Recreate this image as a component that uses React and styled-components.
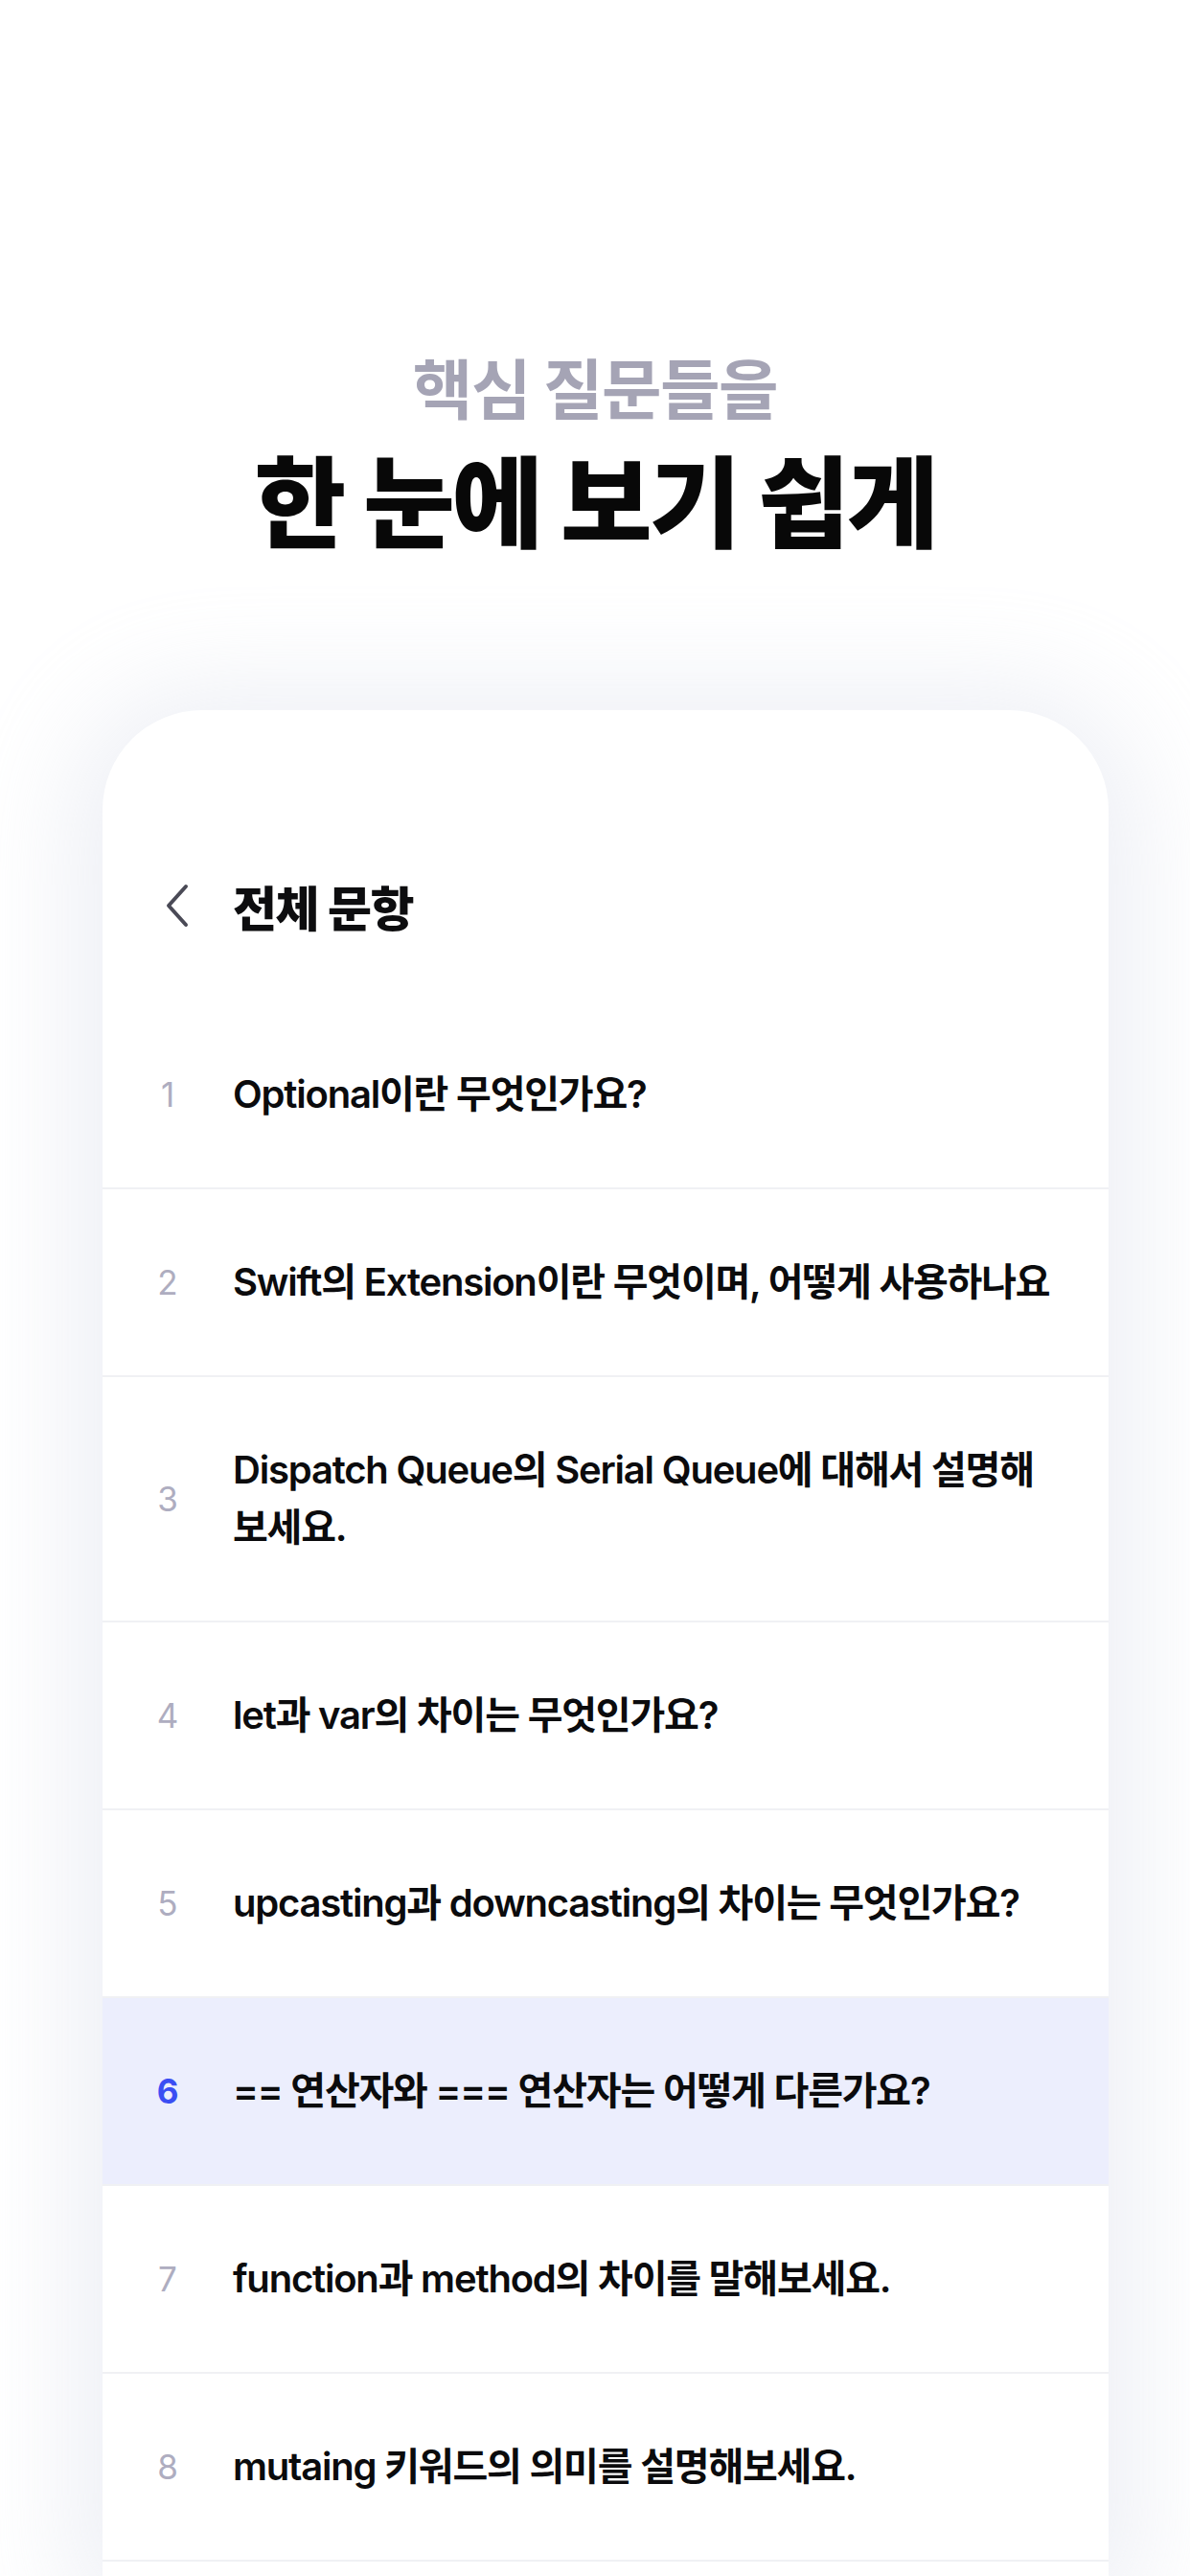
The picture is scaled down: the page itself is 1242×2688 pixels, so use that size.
import React from 'react';
import styled, { createGlobalStyle } from 'styled-components';

const GlobalStyle = createGlobalStyle`
  html, body {
    margin: 0;
    padding: 0;
    background: #ffffff;
  }
  body {
    font-family: Inter, "Noto Sans CJK KR", sans-serif;
    -webkit-font-smoothing: antialiased;
  }
`

const Page = styled.div`
  width: 1242px;
  height: 2688px;
  overflow: hidden;
  display: flex;
  flex-direction: column;
  background: #ffffff;
`

const Hero = styled.header`
  display: flex;
  flex-direction: column;
  align-items: center;
  padding-top: 362px;
  padding-bottom: 157px;
`

const Eyebrow = styled.h2`
  margin: 0;
  font-family: "Noto Sans CJK KR", sans-serif;
  font-size: 68px;
  line-height: 82px;
  font-weight: 700;
  letter-spacing: -1.5px;
  color: #a5a4b5;
`

const Headline = styled.h1`
  margin: 10px 0 0;
  font-family: "Noto Sans CJK KR", sans-serif;
  font-size: 104px;
  line-height: 130px;
  font-weight: 900;
  letter-spacing: -3px;
  color: #080808;
`

const Card = styled.section`
  margin-left: 107px;
  width: 1050px;
  flex: 1;
  background: #ffffff;
  border-radius: 104px 104px 0 0;
  box-shadow: 0 10px 110px 30px rgba(214, 220, 232, 0.45);
  overflow: hidden;
`

const CardHeader = styled.div`
  height: 304px;
  box-sizing: border-box;
  padding: 174px 0 0 64px;
`

const HeaderRow = styled.div`
  display: flex;
  align-items: center;
  gap: 44px;
  height: 60px;
`

const BackButton = styled.button`
  border: 0;
  background: none;
  padding: 0;
  width: 28px;
  height: 46px;
  display: flex;
  align-items: center;
  justify-content: center;
  color: #4a4a56;
`

const CardTitle = styled.h3`
  margin: 0;
  font-family: "Noto Sans CJK KR", sans-serif;
  font-size: 50px;
  font-weight: 800;
  letter-spacing: -1.5px;
  color: #0d0d0f;
`

const List = styled.ol`
  list-style: none;
  margin: 0;
  padding: 0;
`

const Row = styled.li`
  display: flex;
  align-items: center;
  padding: 67px 50px 67px 50px;
  border-bottom: 2px solid #f0f1f4;
  background: ${p => (p.$active ? '#eceefd' : '#ffffff')};
`

const Num = styled.span`
  flex: 0 0 36px;
  text-align: center;
  font-family: Inter, sans-serif;
  font-size: 35px;
  font-weight: ${p => (p.$active ? 700 : 400)};
  color: ${p => (p.$active ? '#3b4ef3' : '#aeadc0')};
  margin-right: 50px;
`

const Question = styled.span`
  flex: 1;
  font-size: 40px;
  line-height: 60px;
  font-weight: 600;
  letter-spacing: -1.2px;
  color: #0b0b0d;
`

const questions = [
  'Optional이란 무엇인가요?',
  'Swift의 Extension이란 무엇이며, 어떻게 사용하나요',
  'Dispatch Queue의 Serial Queue에 대해서 설명해보세요.',
  'let과 var의 차이는 무엇인가요?',
  'upcasting과 downcasting의 차이는 무엇인가요?',
  '== 연산자와 === 연산자는 어떻게 다른가요?',
  'function과 method의 차이를 말해보세요.',
  'mutaing 키워드의 의미를 설명해보세요.',
];

const ChevronLeft = () => (
  <svg width="26" height="46" viewBox="0 0 26 46" fill="none">
    <path d="M22 3 L4 23 L22 43" stroke="currentColor" strokeWidth="4" strokeLinecap="round" strokeLinejoin="round" />
  </svg>
);

const App = () => {
  const active = 6;

  return (
    <Page>
      <GlobalStyle />
      <Hero>
        <Eyebrow>핵심 질문들을</Eyebrow>
        <Headline>한 눈에 보기 쉽게</Headline>
      </Hero>
      <Card>
        <CardHeader>
          <HeaderRow>
            <BackButton aria-label="뒤로">
              <ChevronLeft />
            </BackButton>
            <CardTitle>전체 문항</CardTitle>
          </HeaderRow>
        </CardHeader>
        <List>
          {questions.map((q, i) => (
            <Row key={i} $active={i + 1 === active}>
              <Num $active={i + 1 === active}>{i + 1}</Num>
              <Question>{q}</Question>
            </Row>
          ))}
        </List>
      </Card>
    </Page>
  );
};

export default App;
